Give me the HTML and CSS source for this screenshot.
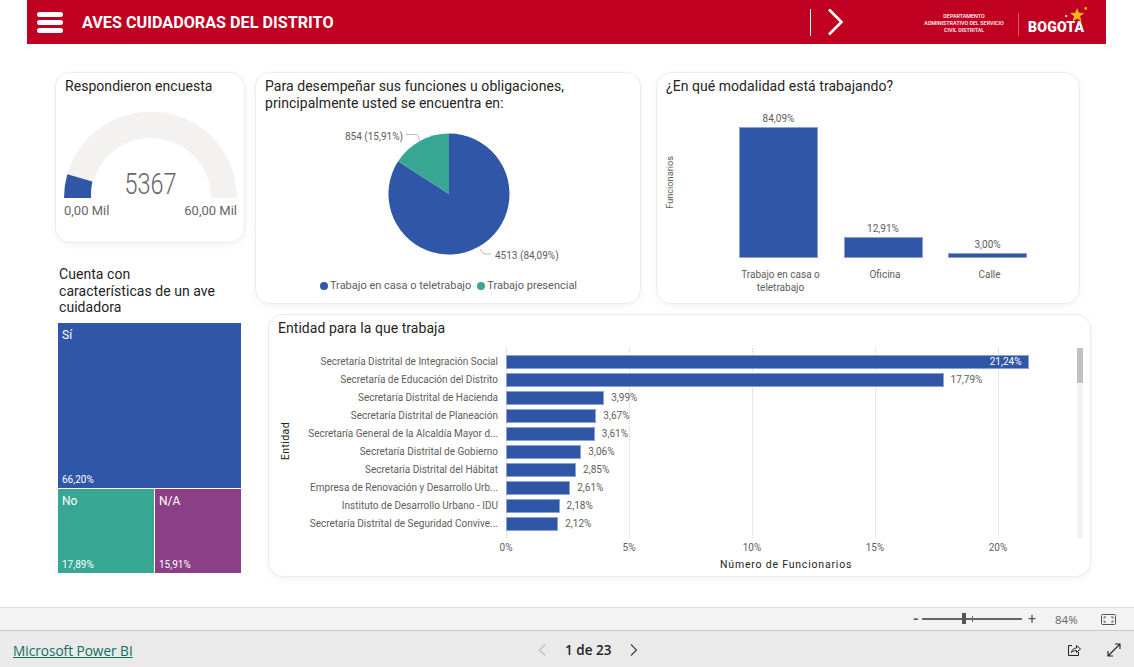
FILE: index.html
```html
<!DOCTYPE html>
<html lang="es">
<head>
  <meta charset="UTF-8">
  <title>Aves cuidadoras del Distrito</title>
  <link rel="stylesheet" href="styles.css">
</head>
<body>
  <header class="banner">
    <div class="burger"><span></span><span></span><span></span></div>
    <h1>AVES CUIDADORAS DEL DISTRITO</h1>
    <div class="next-page">
      <svg width="18" height="28" viewBox="0 0 18 28"><path d="M3 1.5 15.5 14 3 26.5" fill="none" stroke="#fff" stroke-width="2.6"/></svg>
    </div>
    <div class="dept">DEPARTAMENTO<br>ADMINISTRATIVO DEL SERVICIO<br>CIVIL DISTRITAL</div>
    <div class="bogota">
      <svg class="star" width="26" height="20" viewBox="0 0 24 18">
        <path d="M13 1.5l1.7 4.6 4.9.2-3.8 3 1.3 4.7-4.1-2.7-4.1 2.7 1.3-4.7-3.8-3 4.900-.2z" fill="#f5b120"/>
        <circle cx="21" cy="2" r="1.300" fill="#f5b120"/>
        <circle cx="3" cy="9" r="1" fill="#fff"/>
      </svg>
      BOGOTA
    </div>
  </header>

  <main class="report">
    <div class="left-col">
      <section class="card gauge-card">
        <h2>Respondieron encuesta</h2>
        <svg class="gauge" width="190" height="120" viewBox="55 111 190 120">
          <path d="M64 197a86.500 86.500 0 0 1 173 0h-26a60 60 0 0 0-120 0z" fill="#f3f2f1"/>
          <path d="M64 197a86.500 86.500 0 0 1 3.300-23.800l25 7.200a60 60 0 0 0-1.300 16.600z" fill="#3056a8"/>
          <text class="gauge-value" x="150.500" y="192.500" text-anchor="middle" textLength="52" lengthAdjust="spacingAndGlyphs">5367</text>
          <text class="gauge-limit" x="64" y="214">0,00 Mil</text>
          <text class="gauge-limit" x="237" y="214" text-anchor="end">60,00 Mil</text>
        </svg>
      </section>

      <h2 class="tree-title">Cuenta con características de un ave cuidadora</h2>
      <div class="treemap">
        <div class="tile tile-si"><span>Sí</span><small>66,20%</small></div>
        <div class="tile tile-no"><span>No</span><small>17,89%</small></div>
        <div class="tile tile-na"><span>N/A</span><small>15,91%</small></div>
      </div>
    </div>

    <div class="right-col">
      <div class="top-row">
        <section class="card pie-card">
          <h2>Para desempeñar sus funciones u obligaciones, principalmente usted se encuentra en:</h2>
          <svg class="pie" width="383" height="170" viewBox="256 117 383 170">
            <path d="M449 194V133.500A60.500 60.500 0 1 1 398.100 161.300z" fill="#3056a8"/>
            <path d="M449 194 398.100 161.300A60.500 60.500 0 0 1 449 133.500z" fill="#37a794"/>
            <path d="M406 134.500h11l3 6M480 249l4 5h7" fill="none" stroke="#bbb"/>
            <text class="pie-label" x="403" y="140" text-anchor="end">854 (15,91%)</text>
            <text class="pie-label" x="495" y="259">4513 (84,09%)</text>
          </svg>
          <div class="legend">
            <span class="legend-item"><i class="dot dot-blue"></i>Trabajo en casa o teletrabajo</span>
            <span class="legend-item"><i class="dot dot-teal"></i>Trabajo presencial</span>
          </div>
        </section>

        <section class="card mod-card">
          <h2>¿En qué modalidad está trabajando?</h2>
          <div class="y-title">Funcionarios</div>
          <div class="columns">
            <div class="col">
              <div class="col-area">
                <span>84,09%</span>
                <div class="col-bar" style="height:131px"></div>
              </div>
              <p>Trabajo en casa o teletrabajo</p>
            </div>
            <div class="col">
              <div class="col-area">
                <span>12,91%</span>
                <div class="col-bar" style="height:21px"></div>
              </div>
              <p>Oficina</p>
            </div>
            <div class="col">
              <div class="col-area">
                <span>3,00%</span>
                <div class="col-bar" style="height:5px"></div>
              </div>
              <p>Calle</p>
            </div>
          </div>
        </section>
      </div>

      <section class="card ent-card">
        <h2>Entidad para la que trabaja</h2>
        <div class="ent-body">
          <div class="ent-axis-title"><span>Entidad</span></div>
          <div class="ent-chart">
            <div class="plot">
              <div class="gridlines"><i></i><i></i><i></i><i></i><i></i></div>
              <div class="row"><label>Secretaría Distrital de Integración Social</label><div class="track"><div class="bar" style="width:522.500px"><b>21,24%</b></div></div></div>
              <div class="row"><label>Secretaría de Educación del Distrito</label><div class="track"><div class="bar" style="width:437.600px"></div><span>17,79%</span></div></div>
              <div class="row"><label>Secretaría Distrital de Hacienda</label><div class="track"><div class="bar" style="width:98.200px"></div><span>3,99%</span></div></div>
              <div class="row"><label>Secretaría Distrital de Planeación</label><div class="track"><div class="bar" style="width:90.300px"></div><span>3,67%</span></div></div>
              <div class="row"><label>Secretaría General de la Alcaldía Mayor d...</label><div class="track"><div class="bar" style="width:88.800px"></div><span>3,61%</span></div></div>
              <div class="row"><label>Secretaría Distrital de Gobierno</label><div class="track"><div class="bar" style="width:75.300px"></div><span>3,06%</span></div></div>
              <div class="row"><label>Secretaría Distrital del Hábitat</label><div class="track"><div class="bar" style="width:70.100px"></div><span>2,85%</span></div></div>
              <div class="row"><label>Empresa de Renovación y Desarrollo Urb...</label><div class="track"><div class="bar" style="width:64.200px"></div><span>2,61%</span></div></div>
              <div class="row"><label>Instituto de Desarrollo Urbano - IDU</label><div class="track"><div class="bar" style="width:53.600px"></div><span>2,18%</span></div></div>
              <div class="row"><label>Secretaría Distrital de Seguridad Convive...</label><div class="track"><div class="bar" style="width:52.200px"></div><span>2,12%</span></div></div>
            </div>
            <div class="ticks"><span>0%</span><span>5%</span><span>10%</span><span>15%</span><span>20%</span></div>
            <div class="x-title">Número de Funcionarios</div>
          </div>
          <div class="scroll"><div class="thumb"></div></div>
        </div>
      </section>
    </div>
  </main>

  <div class="statusbar">
    <span class="zoom-sign">-</span>
    <div class="slider"><i class="mark"></i><i class="handle"></i></div>
    <span class="zoom-sign plus">+</span>
    <span class="zoom-pct">84%</span>
    <svg class="fit" width="15" height="11" viewBox="0 0 15 11" fill="none" stroke="#555">
      <rect x=".5" y=".5" width="14" height="10" rx="1"/>
      <path d="M5 3H3v1.500M10 3h2v1.500M5 8H3V6.500M10 8h2V6.500"/>
    </svg>
  </div>

  <footer class="footer">
    <a class="brand" href="#">Microsoft Power BI</a>
    <div class="pager">
      <svg width="8" height="12" viewBox="0 0 8 12"><path d="M7 .5 1.500 6 7 11.500" fill="none" stroke="#bdbdbd" stroke-width="1.200"/></svg>
      <span>1 de 23</span>
      <svg width="8" height="12" viewBox="0 0 8 12"><path d="M1 .5 6.500 6 1 11.500" fill="none" stroke="#444" stroke-width="1.200"/></svg>
    </div>
    <div class="foot-icons">
      <svg width="14" height="14" viewBox="0 0 14 14" fill="none" stroke="#222">
        <path d="M5 2.500H1.500v10h10V9"/>
        <path d="M4.500 9.500C5 6.500 7 5 9.500 5V2.500L13.500 6l-4 3.500V7.500C7.500 7.500 6 8 4.500 9.500z"/>
      </svg>
      <svg width="14" height="14" viewBox="0 0 14 14" fill="none" stroke="#222" stroke-width="1.100">
        <path d="M1 13 13 1M8 1h5v5M1 8v5h5"/>
      </svg>
    </div>
  </footer>
</body>
</html>
```

FILE: styles.css
```css
* {
  box-sizing: border-box;
}

body {
  margin: 0;
  height: 667px;
  overflow: hidden;
  background: #fff;
  font-family: Roboto, "Liberation Sans", sans-serif;
  color: #252423;
}

h2 {
  margin: 0;
  font-size: 14px;
  font-weight: 400;
  line-height: 16.500px;
  letter-spacing: .05px;
}

/* top banner */
.banner {
  display: flex;
  align-items: center;
  height: 44px;
  margin: 0 28px 0 27px;
  background: #c00020;
  color: #fff;
}

.burger {
  display: flex;
  flex-direction: column;
  gap: 3px;
  width: 26px;
  margin-left: 10px;
}

.burger span {
  height: 5px;
  border-radius: 3px;
  background: #fff;
}

.banner h1 {
  margin: 0 0 0 19px;
  font-size: 16.200px;
  font-weight: 700;
  white-space: nowrap;
}

.next-page {
  display: flex;
  align-items: center;
  height: 27px;
  margin-left: 476px;
  padding-left: 15px;
  border-left: 1.500px solid #fff;
}

.dept {
  width: 90px;
  margin: 3px 0 0 75.500px;
  font-size: 5.400px;
  font-weight: 500;
  line-height: 6.700px;
  text-align: center;
  white-space: nowrap;
}

.bogota {
  position: relative;
  align-self: flex-start;
  height: 23px;
  margin: 13px 0 0 9px;
  padding: 6px 0 0 9px;
  border-left: 1px solid #d65a6c;
  font-size: 14px;
  font-weight: 900;
  line-height: 16px;
  letter-spacing: .2px;
}

.star {
  position: absolute;
  top: -7px;
  left: 44px;
}

/* report canvas */
.report {
  display: flex;
  gap: 10px;
  height: 563px;
  padding: 28px 0 0 55px;
}

.card {
  border: 1px solid #ececec;
  border-radius: 15px;
  background: #fff;
  box-shadow: 0 2px 7px rgba(0, 0, 0, .05);
}

.left-col {
  width: 190px;
}

.gauge-card {
  height: 171px;
}

.gauge-card h2 {
  padding: 5px 0 0 9px;
}

.gauge {
  display: block;
  margin: 17px 0 0 -1px;
}

.gauge-value {
  font-size: 29px;
  font-weight: 300;
  fill: #666;
}

.gauge-limit {
  font-size: 13px;
  fill: #666;
}

.tree-title {
  width: 160px;
  margin: 23px 0 0 4px;
}

.treemap {
  display: grid;
  grid-template-columns: 96px 86px;
  grid-template-rows: 165px 84px;
  gap: 1px;
  width: 183px;
  margin: 7px 0 0 3px;
}

.tile {
  display: flex;
  flex-direction: column;
  justify-content: space-between;
  padding: 4px 4px 1px;
  color: #fff;
  font-size: 12px;
  line-height: 16px;
}

.tile small {
  font-size: 10px;
  line-height: 14px;
}

.tile-si {
  grid-column: span 2;
  background: #3056a8;
}

.tile-no {
  background: #37a794;
}

.tile-na {
  background: #8b3f87;
}

.right-col {
  width: 838px;
}

.top-row {
  display: flex;
  gap: 15px;
}

.pie-card {
  width: 386px;
  height: 232px;
}

.pie-card h2,
.mod-card h2,
.ent-card h2 {
  padding: 5px 8px 0 9px;
}

.pie {
  display: block;
  margin-top: 6px;
}

.pie-label {
  font-size: 10px;
  fill: #605e5c;
}

.legend {
  display: flex;
  justify-content: center;
  gap: 6px;
  margin: -8px 0 0 1px;
  font-size: 11px;
  color: #605e5c;
}

.legend-item {
  display: flex;
  align-items: center;
  gap: 2px;
}

.dot {
  width: 8px;
  height: 8px;
  border-radius: 50%;
}

.dot-blue {
  background: #3056a8;
}

.dot-teal {
  background: #37a794;
}

.mod-card {
  position: relative;
  width: 424px;
  height: 232px;
}

.y-title {
  position: absolute;
  left: 7px;
  top: 83px;
  font-size: 9.200px;
  color: #605e5c;
  writing-mode: vertical-rl;
  transform: rotate(180deg);
}

.columns {
  display: flex;
  gap: 25.500px;
  margin: 17px 0 0 82px;
}

.col {
  width: 79px;
}

.col-area {
  display: flex;
  flex-direction: column;
  justify-content: flex-end;
  align-items: center;
  height: 146px;
  font-size: 10px;
  color: #605e5c;
}

.col-area span {
  margin-bottom: 3px;
}

.col-bar {
  width: 100%;
  background: #3056a8;
  border: 1px solid #8ea2d2;
}

.col p {
  margin: 10px -10px 0 -6px;
  font-size: 10px;
  line-height: 13px;
  text-align: center;
  color: #605e5c;
}

.ent-card {
  width: 823px;
  height: 263px;
  margin: 10px 0 0 13px;
}

.ent-body {
  display: flex;
  margin-top: 10px;
  padding-left: 10px;
}

.ent-axis-title {
  display: flex;
  align-items: center;
  width: 18px;
  height: 190px;
  font-size: 10.500px;
  letter-spacing: .4px;
}

.ent-axis-title span {
  writing-mode: vertical-rl;
  transform: rotate(180deg);
}

.ent-chart {
  width: 770px;
  padding-top: 6px;
}

.plot {
  position: relative;
}

.gridlines {
  position: absolute;
  top: -5px;
  bottom: -5px;
  left: 209px;
  display: flex;
  gap: 122px;
}

.gridlines i {
  width: 1px;
  border-left: 1px dotted #d4d4d4;
}

.row {
  position: relative;
  display: flex;
  align-items: center;
  height: 18px;
}

.row label {
  width: 201px;
  margin-right: 8px;
  font-size: 10px;
  text-align: right;
  white-space: nowrap;
  color: #605e5c;
}

.track {
  display: flex;
  align-items: center;
  gap: 7px;
  font-size: 10px;
  color: #605e5c;
}

.bar {
  display: flex;
  justify-content: flex-end;
  align-items: center;
  height: 14px;
  padding-right: 6px;
  background: #3056a8;
  border: 1px solid #8ea2d2;
}

.bar b {
  font-weight: 400;
  color: #fff;
}

.ticks {
  display: flex;
  margin: 9px 0 0 147.500px;
  font-size: 10px;
  color: #605e5c;
}

.ticks span {
  flex: none;
  width: 123px;
  text-align: center;
}

.x-title {
  margin: 5px 0 0 423px;
  font-size: 10.500px;
  letter-spacing: .8px;
  white-space: nowrap;
}

.scroll {
  width: 6px;
  height: 190px;
  margin: 1px 0 0 10px;
  background: #f3f3f3;
}

.thumb {
  height: 35px;
  background: #c0c0c0;
}

/* zoom strip and footer */
.statusbar {
  display: flex;
  align-items: center;
  height: 24px;
  padding-left: 913px;
  border-top: 1px solid #dcdcdc;
  border-bottom: 1px solid #c8c8c8;
  background: #f3f3f3;
  color: #555;
}

.zoom-sign {
  width: 9px;
  font-size: 14px;
  font-weight: 700;
  line-height: 14px;
}

.zoom-sign.plus {
  width: 12px;
  margin-left: 6px;
  font-weight: 400;
}

.slider {
  position: relative;
  width: 100px;
  height: 1.500px;
  background: #666;
}

.handle {
  position: absolute;
  left: 40px;
  top: -5px;
  width: 4px;
  height: 11px;
  background: #555;
}

.mark {
  position: absolute;
  left: 50px;
  top: -2px;
  width: 1px;
  height: 6px;
  background: #666;
}

.zoom-pct {
  margin-left: 15px;
  font-family: "Open Sans", sans-serif;
  font-size: 11.500px;
  color: #666;
}

.fit {
  margin-left: 23px;
}

.footer {
  display: flex;
  align-items: center;
  height: 37px;
  padding-left: 13px;
  background: #eaeaea;
}

.brand {
  width: 120px;
  padding-top: 1px;
  font-family: "Open Sans", sans-serif;
  font-size: 13.600px;
  color: #0f6f5e;
  white-space: nowrap;
}

.pager {
  display: flex;
  align-items: center;
  gap: 19px;
  margin-left: 405px;
  font-family: "Open Sans", sans-serif;
  font-size: 13.500px;
  font-weight: 600;
  color: #252423;
}

.foot-icons {
  display: flex;
  gap: 26px;
  margin-left: 429px;
}
```
